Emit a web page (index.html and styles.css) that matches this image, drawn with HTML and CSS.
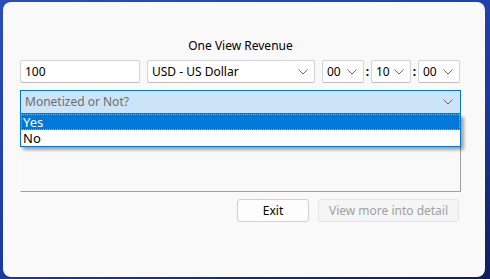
FILE: index.html
```html
<!DOCTYPE html>
<html lang="en">

<head>
    <meta charset="UTF-8">
    <title>One View Revenue</title>
    <link rel="stylesheet" href="styles.css">
</head>

<body>
    <div class="window">
        <div class="title">One View Revenue</div>

        <div class="row">
            <div class="textbox amount">100</div>
            <div class="combo currency">
                <span>USD - US Dollar</span>
                <svg class="chev" width="10" height="6" viewBox="0 0 10 6"><path d="M0.5 0.5 L5 5 L9.5 0.5" /></svg>
            </div>
            <div class="combo time">
                <span>00</span>
                <svg class="chev" width="10" height="6" viewBox="0 0 10 6"><path d="M0.5 0.5 L5 5 L9.5 0.5" /></svg>
            </div>
            <span class="colon">:</span>
            <div class="combo time mid">
                <span>10</span>
                <svg class="chev" width="10" height="6" viewBox="0 0 10 6"><path d="M0.5 0.5 L5 5 L9.5 0.5" /></svg>
            </div>
            <span class="colon">:</span>
            <div class="combo time">
                <span>00</span>
                <svg class="chev" width="10" height="6" viewBox="0 0 10 6"><path d="M0.5 0.5 L5 5 L9.5 0.5" /></svg>
            </div>
        </div>

        <div class="dropdown-wrap">
            <div class="combo monetized">
                <span>Monetized or Not?</span>
                <svg class="chev" width="10" height="6" viewBox="0 0 10 6"><path d="M0.5 0.5 L5 5 L9.5 0.5" /></svg>
            </div>
            <ul class="list">
                <li class="selected">Yes</li>
                <li>No</li>
            </ul>
            <div class="panel"></div>
        </div>

        <div class="buttons">
            <button class="btn exit">Exit</button>
            <button class="btn detail" disabled>View more into detail</button>
        </div>
    </div>
</body>

</html>
```

FILE: styles.css
```css
/* page */
body {
    margin: 0;
    width: 490px;
    height: 279px;
    overflow: hidden;
    font-family: "Noto Sans", "Open Sans", sans-serif;
    font-size: 12px;
    color: #000000;
    background: linear-gradient(160deg, #2a4fb8, #1b3aa0 60%, #0f1f5c);
}

/* form window */
.window {
    box-sizing: border-box;
    width: 482px;
    height: 275px;
    margin: 2px 0 0 3px;
    padding: 36px 0 0 17px;
    background-color: #f9f9f9;
    border-radius: 8px;
}

.title {
    width: 441px;
    text-align: center;
    line-height: 16px;
    margin-bottom: 6px;
}

.row {
    display: flex;
    align-items: center;
    height: 23px;
}

.textbox,
.combo {
    box-sizing: border-box;
    height: 23px;
    background-color: #ffffff;
    border: 1px solid #d4d4d4;
    border-bottom-color: #bdbdbd;
    border-radius: 2px;
    display: flex;
    align-items: center;
    padding-left: 4px;
    line-height: 16px;
}

.amount {
    width: 120px;
    margin-right: 7px;
}

.combo {
    justify-content: space-between;
    padding-right: 6px;
}

.currency {
    width: 168px;
    margin-right: 7px;
}

.time {
    width: 42px;
}

.time.mid {
    width: 40px;
}

.colon {
    width: 7px;
    text-align: center;
    font-weight: bold;
    font-size: 12px;
}

.chev {
    fill: none;
    stroke: #6a6a6a;
    stroke-width: 1;
}

/* monetized dropdown */
.dropdown-wrap {
    position: relative;
    width: 441px;
    margin-top: 7px;
}

.monetized {
    height: 24px;
    background-color: #cce4f7;
    border: 1px solid #0078d7;
    border-radius: 0;
    color: #6d6d6d;
    padding-right: 7px;
}

.list {
    position: absolute;
    top: 24px;
    left: 0;
    width: 441px;
    box-sizing: border-box;
    margin: 0;
    padding: 0;
    list-style: none;
    background-color: #ffffff;
    border: 1px solid #0078d7;
    border-top: none;
    box-shadow: 3px 3px 3px rgba(0, 0, 0, 0.35);
    font-size: 13px;
    z-index: 2;
}

.list li {
    height: 16px;
    line-height: 16px;
    padding-left: 2px;
}

.list li.selected {
    background-color: #0078d7;
    color: #ffffff;
    outline: 1px dotted #f0a030;
    outline-offset: -1px;
}

.panel {
    box-sizing: border-box;
    height: 72px;
    margin-top: 6px;
    border: 1px solid #ffffff;
    border-right-color: #a0a0a0;
    border-bottom-color: #a0a0a0;
    background-color: #f9f9f9;
}

/* buttons */
.buttons {
    width: 439px;
    display: flex;
    justify-content: flex-end;
    gap: 9px;
    margin-top: 7px;
}

.btn {
    height: 23px;
    padding: 0;
    font-family: "Noto Sans", "Open Sans", sans-serif;
    font-size: 12px;
    background-color: #fdfdfd;
    border: 1px solid #d0d0d0;
    border-radius: 3px;
}

.exit {
    width: 72px;
    color: #000000;
}

.detail {
    width: 141px;
    color: #a0a0a0;
    background-color: #f5f5f5;
    border-color: #e5e5e5;
}
```
